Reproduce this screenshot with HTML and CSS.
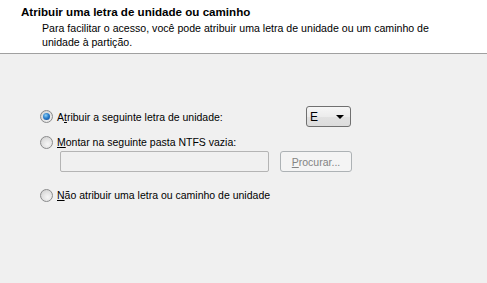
FILE: index.html
```html
<!DOCTYPE html>
<html lang="pt">
<head>
<meta charset="utf-8">
<title>Atribuir letra</title>
<link rel="stylesheet" href="styles.css">
</head>
<body>
<div class="header">
  <div class="title">Atribuir uma letra de unidade ou caminho</div>
  <div class="desc">Para facilitar o acesso, você pode atribuir uma letra de unidade ou um caminho de<br>unidade à partição.</div>
</div>
<div class="content">
  <div class="row row-first">
    <div class="option option-wide">
      <span class="radio checked"></span>
      <span class="label">A<u>t</u>ribuir a seguinte letra de unidade:</span>
    </div>
    <div class="select"><span class="select-value">E</span><span class="arrow"></span></div>
  </div>
  <div class="row row-second">
    <div class="option">
      <span class="radio"></span>
      <span class="label"><u>M</u>ontar na seguinte pasta NTFS vazia:</span>
    </div>
  </div>
  <div class="row row-field">
    <div class="field"></div>
    <div class="button"><u>P</u>rocurar...</div>
  </div>
  <div class="row row-third">
    <div class="option">
      <span class="radio"></span>
      <span class="label"><u>N</u>ão atribuir uma letra ou caminho de unidade</span>
    </div>
  </div>
</div>
</body>
</html>
```
FILE: styles.css
```css
html, body {
  margin: 0;
  padding: 0;
  height: 100%;
}
body {
  font-family: "Liberation Sans", Arial, sans-serif;
  font-size: 10.5px;
  color: #000;
  background: #f0f0f0;
  display: flex;
  flex-direction: column;
}
.header {
  background: #fff;
  height: 54px;
  border-bottom: 1px solid #a0a0a0;
  box-sizing: border-box;
  padding: 5px 0 0 21px;
}
.title {
  font-weight: bold;
  line-height: 14px;
  font-size: 11.6px;
}
.desc {
  margin-left: 21px;
  margin-top: 2px;
  line-height: 14px;
  font-size: 10.6px;
}
.content {
  flex: 1;
  padding-top: 52px;
  padding-left: 40px;
}
.row {
  display: flex;
  align-items: center;
}
.row-first {
  height: 21px;
}
.row-second {
  margin-top: 7px;
  height: 16px;
}
.row-field {
  margin-top: 1px;
  padding-left: 20px;
  gap: 11px;
}
.row-third {
  margin-top: 15px;
  height: 16px;
}
.option {
  display: flex;
  align-items: center;
  gap: 4px;
}
.option-wide {
  width: 266px;
}
.radio {
  width: 13px;
  height: 13px;
  box-sizing: border-box;
  border-radius: 50%;
  border: 1px solid #8a8b8c;
  background: radial-gradient(circle at 60% 65%, #f6f6f6 0%, #e0e0e0 55%, #c9c9c9 100%);
  display: flex;
  align-items: center;
  justify-content: center;
}
.radio.checked::after {
  content: "";
  width: 7px;
  height: 7px;
  border-radius: 50%;
  background: radial-gradient(circle at 40% 35%, #8fd0f5 0%, #2a7fcc 45%, #0f3e8a 100%);
}
.label u, .button u {
  text-decoration: underline;
  text-underline-offset: 1px;
}
.select {
  width: 45px;
  height: 21px;
  box-sizing: border-box;
  border: 1px solid #707070;
  border-radius: 3px;
  background: linear-gradient(#f6f6f6 0%, #ececec 50%, #e2e2e2 51%, #dcdcdc 100%);
  display: flex;
  align-items: center;
  justify-content: space-between;
  padding: 0 6px 0 3px;
  font-size: 12px;
}
.arrow {
  width: 0;
  height: 0;
  border-left: 4px solid transparent;
  border-right: 4px solid transparent;
  border-top: 4px solid #000;
}
.field {
  width: 209px;
  height: 21px;
  box-sizing: border-box;
  border: 1px solid #b4b4b4;
  border-radius: 2px;
  background: #f0f0f0;
}
.button {
  width: 72px;
  height: 21px;
  box-sizing: border-box;
  border: 1px solid #adb2b5;
  border-radius: 3px;
  background: #f4f4f4;
  color: #838383;
  display: flex;
  align-items: center;
  justify-content: center;
}
```
